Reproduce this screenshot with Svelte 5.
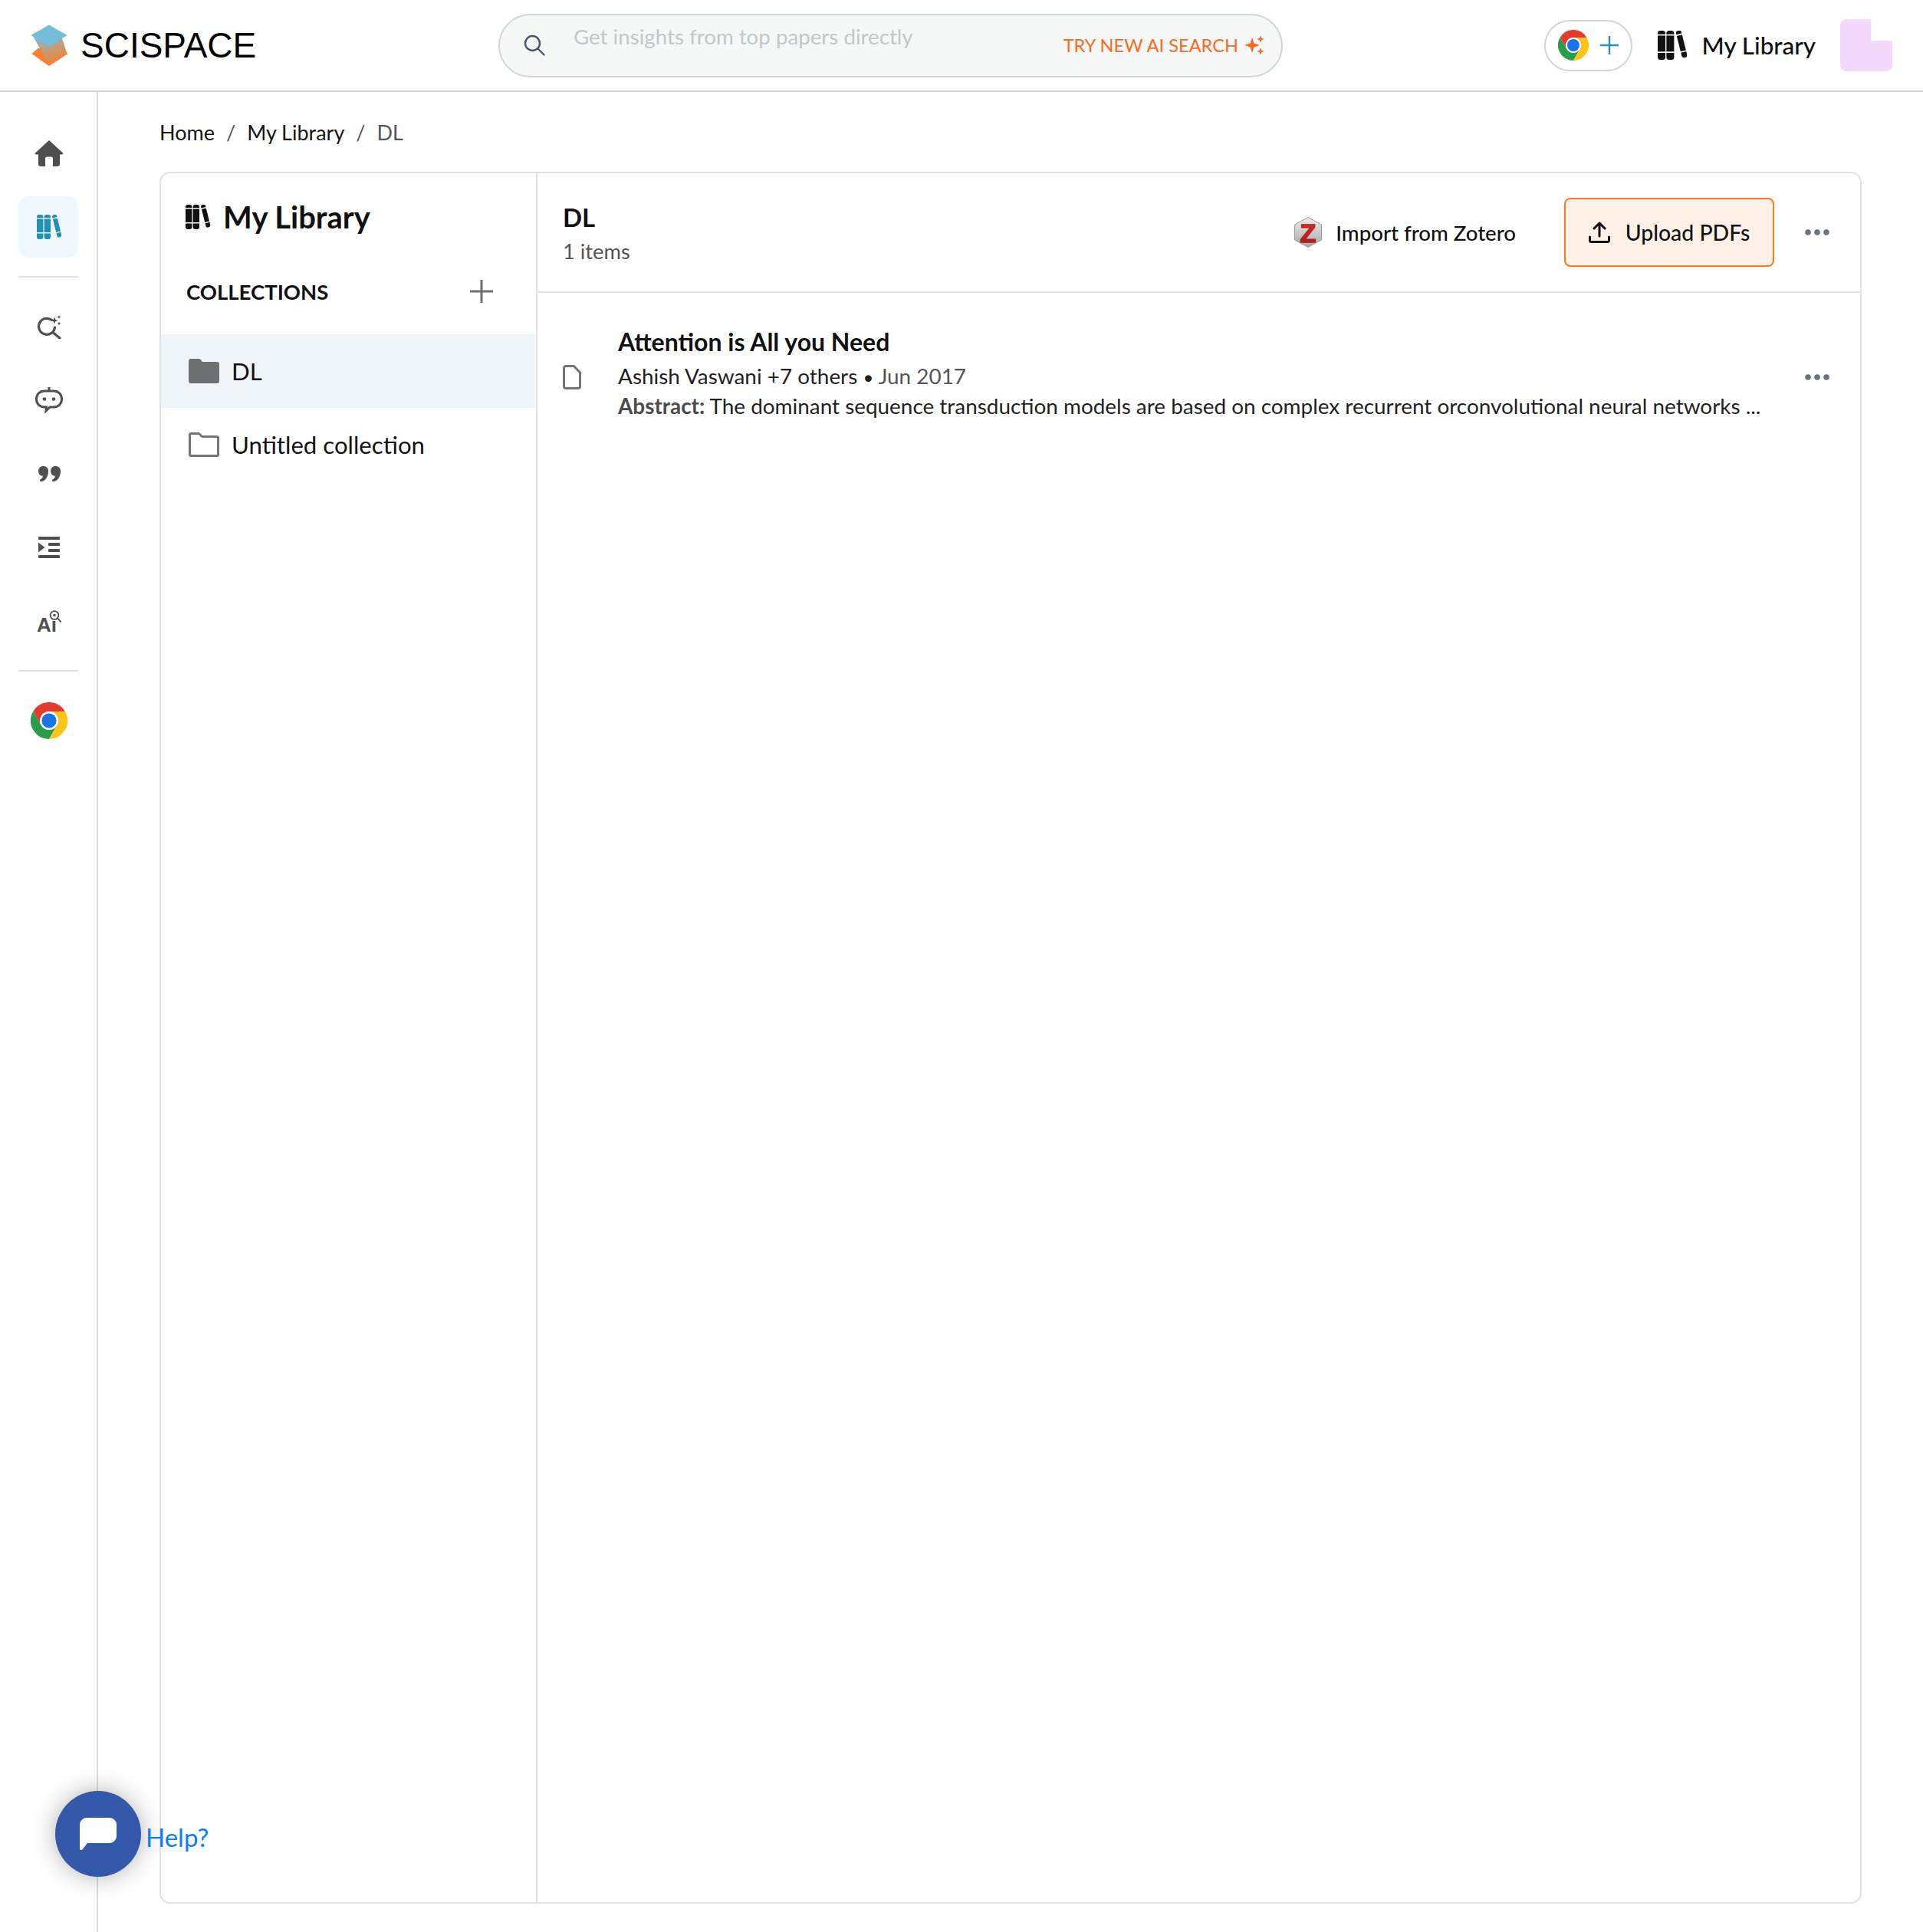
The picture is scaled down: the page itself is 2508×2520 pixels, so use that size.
<script>
  const navIcons = ['search', 'robot', 'quote', 'outline', 'ai'];
</script>

{#snippet chrome(size)}
  <svg width={size} height={size} viewBox="0 0 48 48">
    <circle cx="24" cy="24" r="12" fill="#fff" />
    <path fill="#e33b2e" d="M24 12h20.8A24 24 0 0 0 3.2 12L13.6 30A12 12 0 0 1 24 12Z" />
    <path fill="#2a9d4a" d="M13.6 30 3.2 12A24 24 0 0 0 24 48L34.4 30A12 12 0 0 1 13.6 30Z" />
    <path fill="#fcc419" d="M24 12h20.8A24 24 0 0 1 24 48L34.4 30A12 12 0 0 0 24 12Z" />
    <circle cx="24" cy="24" r="9.6" fill="#1a73e8" />
  </svg>
{/snippet}

{#snippet shelf(size)}
  <svg width={size} height={size} viewBox="0 0 32 32" fill="currentColor">
    {#each [0, 9.6] as x}
      <g transform="translate({x} 0)">
        <path d="M0 3a3 3 0 0 1 3-3h2.4a3 3 0 0 1 3 3v1H0Z" />
        <rect y="5.4" width="8.4" height="17.6" />
        <path d="M0 24.4h8.4V29a3 3 0 0 1-3 3H3a3 3 0 0 1-3-3Z" />
      </g>
    {/each}
    <g transform="translate(19.6 .6) rotate(-14)">
      <path d="M0 2.5A2.5 2.5 0 0 1 2.500 0h1A2.500 2.500 0 0 1 6 2.500V4H0Z" />
      <rect y="5.400" width="6" height="17.600" />
      <path d="M0 24.400h6V28a2.500 2.500 0 0 1-2.500 2.500h-1A2.500 2.500 0 0 1 0 28Z" />
    </g>
  </svg>
{/snippet}

{#snippet dots()}
  <svg class="dots" width="32" height="8" viewBox="0 0 32 8" fill="#6b7280">
    <circle cx="4" cy="4" r="3.800" /><circle cx="16" cy="4" r="3.800" /><circle cx="28" cy="4" r="3.800" />
  </svg>
{/snippet}

{#snippet navIcon(name)}
  {#if name === 'search'}
    <svg width="32" height="32" viewBox="0 0 32 32" fill="none" stroke="#4f4f4f" stroke-width="3.200" stroke-linecap="round">
      <path d="M19.500 7.500A10.500 10.500 0 1 0 23.500 17" />
      <path d="M21.500 24l8.500 7" />
      <path fill="#4f4f4f" stroke="none" d="M23 3.500l1.300 3.200 3.200 1.300-3.200 1.300L23 12.500l-1.300-3.200L18.500 8l3.200-1.300ZM29 1l.7 1.800 1.800.7-1.800.7L29 6l-.7-1.800-1.800-.7 1.800-.7ZM29 9.500l.7 1.800 1.800.7-1.800.7-.7 1.800-.7-1.800-1.800-.7 1.800-.7Z" />
    </svg>
  {:else if name === 'robot'}
    <svg width="36" height="34" viewBox="0 0 36 34" fill="none" stroke="#4f4f4f" stroke-width="3">
      <path d="M18 0v5" />
      <path d="M12 5h12c6.500 0 10.500 4.500 10.500 10.500S30.500 26 24 26h-5l-5 5 .5-5H12C5.500 26 1.500 21.500 1.500 15.500S5.500 5 12 5Z" />
      <circle cx="12" cy="15.500" r="2.300" fill="#4f4f4f" stroke="none" />
      <circle cx="24" cy="15.500" r="2.300" fill="#4f4f4f" stroke="none" />
    </svg>
  {:else if name === 'quote'}
    <svg width="29" height="20" viewBox="0 0 29 20" fill="#4f4f4f">
      <path d="M5.500 0C9.500 0 13 1.500 13 6.500 13 13 10 19 4 20H2.500L2 17.500C4 17 5.500 15.500 6 12.800 2.500 13 0 10 0 6.500 0 3 2.500 0 5.500 0Z" />
      <path d="M21.500 0C25.500 0 29 1.500 29 6.500 29 13 26 19 20 20H18.500L18 17.500C20 17 21.500 15.500 22 12.800 18.500 13 16 10 16 6.500 16 3 18.500 0 21.500 0Z" />
    </svg>
  {:else if name === 'outline'}
    <svg width="28" height="28" viewBox="0 0 28 28" fill="#4f4f4f">
      <rect width="28" height="4" rx="1" />
      <rect y="24" width="28" height="4" rx="1" />
      <rect x="13" y="8" width="15" height="4" rx="1" />
      <rect x="13" y="16" width="15" height="4" rx="1" />
      <path d="M0 7.500 8.500 14 0 20.500Z" />
    </svg>
  {:else}
    <svg class="ai-icon" width="32" height="36" viewBox="0 0 32 36" fill="none">
      <text x="0" y="28.500" class="ai-glyph">Ai</text>
      <circle cx="23" cy="7.500" r="5.400" stroke="#4f4f4f" stroke-width="1.800" fill="#fff" />
      <circle cx="23" cy="7.500" r="1.800" fill="#4f4f4f" />
      <path d="M27 11.500l4.500 4.500" stroke="#4f4f4f" stroke-width="1.800" stroke-linecap="round" />
    </svg>
  {/if}
{/snippet}

<div class="page">
  <header class="topbar">
    <div class="brand">
      <svg class="logo" width="50" height="54" viewBox="0 0 50 54">
        <defs>
          <linearGradient id="logoBand" x1="0.250" y1="0" x2="0.750" y2="1">
            <stop offset="0" stop-color="#8fb7c2" />
            <stop offset="0.950" stop-color="#fb7f2c" />
          </linearGradient>
          <linearGradient id="zotHex" x1="0" y1="0" x2="0" y2="1">
            <stop offset="0" stop-color="#ececec" />
            <stop offset="1" stop-color="#a8a8a8" />
          </linearGradient>
          <linearGradient id="zotRed" x1="0" y1="0" x2="0" y2="1">
            <stop offset="0" stop-color="#e0322c" />
            <stop offset="1" stop-color="#a51a1a" />
          </linearGradient>
        </defs>
        <path fill="#fb7f2c" d="M10 32 3 38 24 53 47 38 30 30Z" stroke="#fb7f2c" stroke-width="2" stroke-linejoin="round" />
        <path fill="url(#logoBand)" d="M3 15 24 53 47.500 38 40 15Z" />
        <path fill="#72bedb" d="M24 1.500 46 14 24 27.500 2 14Z" stroke="#72bedb" stroke-width="2" stroke-linejoin="round" />
      </svg>
      <span class="wordmark">SCISPACE</span>
    </div>

    <div class="search">
      <svg width="30" height="30" viewBox="0 0 30 30" fill="none" stroke="#4b5563" stroke-width="2.400" stroke-linecap="round">
        <circle cx="12.500" cy="12.500" r="9.500" />
        <path d="M19.500 19.500l8 8" />
      </svg>
      <span class="placeholder">Get insights from top papers directly</span>
      <span class="try">TRY NEW AI SEARCH
        <svg width="26" height="26" viewBox="0 0 26 26" fill="#fb6a22">
          <path d="M10 3l2.600 7.400L20 13l-7.400 2.600L10 23l-2.600-7.400L0 13l7.400-2.600ZM21 0l1.300 3.700L26 5l-3.700 1.300L21 10l-1.300-3.700L16 5l3.700-1.300ZM21 16l1.300 3.700L26 21l-3.700 1.300L21 26l-1.300-3.700L16 21l3.700-1.300Z" />
        </svg>
      </span>
    </div>

    <div class="top-actions">
      <div class="chrome-pill">
        {@render chrome(40)}
        <svg width="24" height="24" viewBox="0 0 24 24" stroke="#2b8fb8" stroke-width="2.400"><path d="M12 0v24M0 12h24" /></svg>
      </div>
      <div class="top-lib">
        {@render shelf(38)}
        <span>My Library</span>
      </div>
      <div class="avatar"></div>
    </div>
  </header>

  <div class="body">
    <nav class="rail">
      <a class="rail-item" href="#home" aria-label="Home">
        <svg width="38" height="34" viewBox="0 0 38 34" fill="#4f4f4f">
          <path d="M19 0 37 16.500c.8.800.300 2-.8 2H33V31a3 3 0 0 1-3 3h-6V24a2.500 2.500 0 0 0-2.500-2.500h-5A2.500 2.500 0 0 0 14 24v10H8a3 3 0 0 1-3-3V18.500H1.800c-1.100 0-1.600-1.200-.8-2Z" />
        </svg>
      </a>
      <a class="rail-item active" href="#library" aria-label="Library">{@render shelf(32)}</a>
      <hr />
      {#each navIcons as icon}
        <a class="rail-item" href="#{icon}" aria-label={icon}>{@render navIcon(icon)}</a>
      {/each}
      <hr />
      <a class="rail-item" href="#chrome" aria-label="Chrome extension">{@render chrome(48)}</a>
    </nav>

    <main class="content">
      <div class="crumbs">
        <span>Home</span><i>/</i><span>My Library</span><i>/</i><span class="current">DL</span>
      </div>

      <section class="panel">
        <aside class="collections">
          <div class="lib-title">
            {@render shelf(32)}
            <h2>My Library</h2>
          </div>
          <div class="coll-head">
            <span>COLLECTIONS</span>
            <svg width="30" height="30" viewBox="0 0 30 30" stroke="#6f6f6f" stroke-width="3"><path d="M15 0v30M0 15h30" /></svg>
          </div>
          <div class="coll-row selected">
            <svg width="40" height="32" viewBox="0 0 40 32" fill="#6d7172">
              <path d="M0 3a3 3 0 0 1 3-3h10.500a3 3 0 0 1 2.200 1L18 4h19a3 3 0 0 1 3 3v22a3 3 0 0 1-3 3H3a3 3 0 0 1-3-3Z" />
            </svg>
            <span>DL</span>
          </div>
          <div class="coll-row">
            <svg width="40" height="32" viewBox="0 0 40 32" fill="none" stroke="#757575" stroke-width="3">
              <path d="M1.500 3A1.500 1.500 0 0 1 3 1.500h10.500l4 4H37A1.500 1.500 0 0 1 38.500 7v22a1.500 1.500 0 0 1-1.500 1.500H3A1.500 1.500 0 0 1 1.500 29Z" stroke-linejoin="round" />
            </svg>
            <span>Untitled collection</span>
          </div>
        </aside>

        <div class="items">
          <div class="items-head">
            <div class="head-text">
              <h3>DL</h3>
              <p>1 items</p>
            </div>
            <button class="zotero">
              <svg width="36" height="40" viewBox="0 0 36 40">
                <path d="M18 .5 35.500 10v20L18 39.500.5 30V10Z" fill="url(#zotHex)" stroke="#9a9a9a" />
                <text x="18" y="32.500" text-anchor="middle" class="z-glyph">Z</text>
              </svg>
              Import from Zotero
            </button>
            <button class="upload">
              <svg width="28" height="28" viewBox="0 0 28 28" fill="none" stroke="#111" stroke-width="3" stroke-linecap="round" stroke-linejoin="round">
                <path d="M14 19V2M7 9l7-7 7 7M1.500 20v4.500a2 2 0 0 0 2 2h21a2 2 0 0 0 2-2V20" />
              </svg>
              Upload PDFs
            </button>
            {@render dots()}
          </div>

          <article class="paper">
            <svg class="doc" width="24" height="32" viewBox="0 0 24 32" fill="none" stroke="#757575" stroke-width="3" stroke-linejoin="round">
              <path d="M1.500 4A2.500 2.500 0 0 1 4 1.500h10.500L22.500 10v18a2.500 2.500 0 0 1-2.500 2.500H4A2.500 2.500 0 0 1 1.500 28Z" />
            </svg>
            <div class="paper-text">
              <h4>Attention is All you Need</h4>
              <p class="authors">Ashish Vaswani +7 others <b>•</b> <span>Jun 2017</span></p>
              <p class="abstract"><strong>Abstract:</strong> The dominant sequence transduction models are based on complex recurrent orconvolutional neural networks ...</p>
            </div>
            {@render dots()}
          </article>
        </div>
      </section>
    </main>
  </div>

  <div class="help">
    <button class="help-btn" aria-label="Help">
      <svg width="48" height="42" viewBox="0 0 48 42" fill="#fff">
        <path d="M9 0h30a9 9 0 0 1 9 9v15a9 9 0 0 1-9 9H10L3 42c-1 .800-3 0-3-2V9a9 9 0 0 1 9-9Z" />
      </svg>
    </button>
    <span>Help?</span>
  </div>
</div>

<style>
  :global(body) {
    margin: 0;
    background: #fff;
    font-family: Lato, "Noto Sans", sans-serif;
    color: #111;
  }

  .page {
    height: 2520px;
    display: flex;
    flex-direction: column;
    position: relative;
    overflow: hidden;
  }

  .topbar {
    height: 118px;
    flex: none;
    border-bottom: 2px solid #d4d4d4;
    display: flex;
    align-items: center;
    padding: 0 40px;
    position: relative;
  }

  .brand {
    display: flex;
    align-items: center;
    gap: 15px;
    width: 610px;
    flex: none;
  }

  .logo {
    flex: none;
  }

  .wordmark {
    font-family: "Liberation Sans", Arial, sans-serif;
    font-size: 46px;
    color: #000;
  }

  .search {
    width: 1023px;
    height: 83px;
    box-sizing: border-box;
    flex: none;
    border: 2px solid #d1d5db;
    border-radius: 42px;
    background: #f6f8f8;
    display: flex;
    align-items: center;
    padding: 0 22px 0 30px;
  }

  .placeholder {
    margin-left: 36px;
    margin-top: -23px;
    color: #c4c7ca;
    font-size: 27.7px;
  }

  .try {
    margin-left: auto;
    display: flex;
    align-items: center;
    gap: 8px;
    color: #fb6a22;
    font-size: 23.6px;
  }

  .top-actions {
    margin-left: auto;
    display: flex;
    align-items: center;
  }

  .chrome-pill {
    width: 115px;
    height: 67px;
    box-sizing: border-box;
    border: 2px solid #d1d5db;
    border-radius: 34px;
    display: flex;
    align-items: center;
    justify-content: center;
    gap: 15px;
  }

  .top-lib {
    display: flex;
    align-items: center;
    gap: 19px;
    margin-left: 33px;
    font-size: 31.4px;
    font-weight: 500;
  }

  .avatar {
    width: 68px;
    height: 68px;
    margin-left: 32px;
    background: #f3d9fb;
    border-radius: 8px;
    clip-path: polygon(0 0, 59% 0, 59% 41%, 100% 41%, 100% 100%, 0 100%);
  }

  .body {
    flex: 1;
    display: flex;
    min-height: 0;
  }

  .rail {
    width: 128px;
    flex: none;
    box-sizing: border-box;
    border-right: 2px solid #dcdcdc;
    padding: 40px 24px 0 24px;
    display: flex;
    flex-direction: column;
    gap: 16px;
  }

  .rail-item {
    height: 80px;
    flex: none;
    box-sizing: border-box;
    padding-left: 2px;
    display: flex;
    align-items: center;
    justify-content: center;
    border-radius: 14px;
    color: #4f4f4f;
  }

  .rail-item.active {
    background: #eff8fe;
    color: #2190b6;
  }

  .rail hr {
    width: 100%;
    margin: 8px 0;
    border: none;
    border-top: 2px solid #e0e0e0;
  }

  .ai-icon {
    margin-top: 6px;
  }

  .ai-glyph {
    font-family: "Liberation Sans", sans-serif;
    font-size: 26px;
    font-weight: 700;
    fill: #4f4f4f;
  }

  .z-glyph {
    font-family: "Liberation Sans", sans-serif;
    font-size: 34px;
    font-weight: 700;
    fill: url(#zotRed);
    stroke: #b3201d;
    stroke-width: 1.5px;
  }

  .content {
    flex: 1;
    min-width: 0;
    display: flex;
    flex-direction: column;
    padding: 0 80px 37px 80px;
  }

  .crumbs {
    height: 104px;
    flex: none;
    display: flex;
    align-items: center;
    font-size: 27px;
    color: #161616;
  }

  .crumbs i {
    font-style: normal;
    margin: 0 15px;
    color: #555;
  }

  .crumbs .current {
    color: #555;
  }

  .panel {
    flex: 1;
    min-height: 0;
    display: flex;
    box-sizing: border-box;
    border: 2px solid #e2e2e2;
    border-radius: 14px;
  }

  .collections {
    width: 489px;
    flex: none;
    border-right: 2px solid #e2e2e2;
  }

  .lib-title {
    display: flex;
    align-items: center;
    gap: 17px;
    height: 92px;
    padding: 0 0 0 32px;
    margin-top: 11px;
  }

  .lib-title h2 {
    margin: 0;
    font-size: 40px;
    font-weight: 700;
  }

  .coll-head {
    display: flex;
    align-items: center;
    justify-content: space-between;
    height: 102px;
    margin-bottom: 5px;
    padding: 0 56px 0 33px;
    font-size: 27.5px;
    font-weight: 700;
  }

  .coll-row {
    height: 96px;
    display: flex;
    align-items: center;
    gap: 16px;
    padding-left: 36px;
    font-size: 31.2px;
  }

  .coll-row.selected {
    background: #f0f5f9;
  }

  .items {
    flex: 1;
    min-width: 0;
  }

  .items-head {
    height: 156px;
    box-sizing: border-box;
    border-bottom: 2px solid #e2e2e2;
    display: flex;
    align-items: center;
    padding: 0 40px 0 33px;
  }

  .head-text {
    margin-right: auto;
    padding-top: 3px;
  }

  .head-text h3 {
    margin: 0 0 3px;
    font-size: 33px;
    font-weight: 700;
    line-height: 44px;
  }

  .head-text p {
    margin: 0;
    font-size: 27.3px;
    line-height: 40px;
    color: #555;
  }

  button {
    font-family: inherit;
    color: #111;
    background: none;
    border: none;
    padding: 0;
  }

  .zotero {
    display: flex;
    align-items: center;
    gap: 18px;
    font-size: 27.6px;
    font-weight: 500;
    margin-right: 63px;
  }

  .upload {
    width: 274px;
    height: 90px;
    box-sizing: border-box;
    display: flex;
    align-items: center;
    justify-content: center;
    gap: 20px;
    font-size: 28.4px;
    font-weight: 500;
    background: #fff1e8;
    border: 2px solid #fb7a1e;
    border-radius: 8px;
    margin-right: 40px;
  }

  .dots {
    flex: none;
  }

  .paper {
    display: flex;
    align-items: center;
    padding: 44px 40px 0 33px;
  }

  .paper .dots {
    margin-top: 8px;
  }

  .doc {
    flex: none;
    margin-right: 48px;
    margin-top: 8px;
  }

  .paper-text {
    flex: 1;
    min-width: 0;
  }

  .paper-text h4 {
    margin: 0 0 4px;
    font-size: 32px;
    font-weight: 700;
    line-height: 40px;
  }

  .paper-text p {
    margin: 0;
    font-size: 27.9px;
    line-height: 40px;
    color: #1f1f1f;
  }

  .paper-text p.abstract {
    margin-top: -3px;
  }

  .authors b {
    font-weight: 400;
    font-size: 24px;
  }

  .authors span {
    color: #555;
  }

  .abstract strong {
    color: #4b4b4b;
    font-weight: 700;
  }

  .help {
    position: absolute;
    left: 72px;
    top: 2336px;
    display: flex;
    align-items: center;
    gap: 6px;
    color: #0a7cff;
    font-size: 33px;
  }

  .help span {
    margin-top: 8px;
  }

  .help-btn {
    width: 112px;
    height: 112px;
    border-radius: 50%;
    background: #3559aa;
    box-shadow: 0 0 32px rgba(0, 0, 0, 0.3);
    display: flex;
    align-items: center;
    justify-content: center;
  }
</style>
